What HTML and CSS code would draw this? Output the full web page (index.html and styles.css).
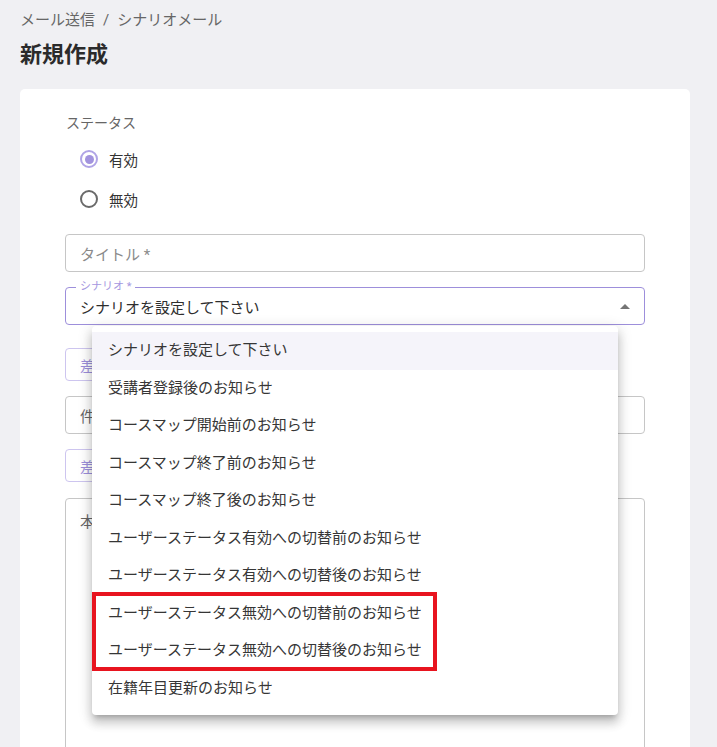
FILE: index.html
```html
<!DOCTYPE html>
<html lang="ja">
<head>
    <meta charset="UTF-8">
    <meta name="viewport" content="width=device-width, initial-scale=1.0">
    <title>新規作成</title>
    <link rel="stylesheet" href="styles.css">
</head>
<body>
    <div class="page">
        <div class="crumbs">
            <span>メール送信</span>
            <span class="sep">/</span>
            <span>シナリオメール</span>
        </div>
        <h1 class="page-title">新規作成</h1>

        <div class="card">
            <div class="group-label">ステータス</div>
            <div class="radios">
                <label class="radio-row">
                    <span class="radio checked"></span>
                    <span>有効</span>
                </label>
                <label class="radio-row">
                    <span class="radio"></span>
                    <span>無効</span>
                </label>
            </div>

            <div class="field title-field">
                <span class="placeholder">タイトル *</span>
            </div>

            <div class="field select focused">
                <span class="float-label">シナリオ *</span>
                <span class="value">シナリオを設定して下さい</span>
                <span class="caret"></span>

                <ul class="menu">
                    <li class="selected">シナリオを設定して下さい</li>
                    <li>受講者登録後のお知らせ</li>
                    <li>コースマップ開始前のお知らせ</li>
                    <li>コースマップ終了前のお知らせ</li>
                    <li>コースマップ終了後のお知らせ</li>
                    <li>ユーザーステータス有効への切替前のお知らせ</li>
                    <li>ユーザーステータス有効への切替後のお知らせ</li>
                    <li>ユーザーステータス無効への切替前のお知らせ</li>
                    <li>ユーザーステータス無効への切替後のお知らせ</li>
                    <li>在籍年目更新のお知らせ</li>
                    <div class="mark"></div>
                </ul>
            </div>

            <button class="chip first">差し込み文字</button>

            <div class="field subject">
                <span class="placeholder dark">件名 *</span>
            </div>

            <button class="chip">差し込み文字</button>

            <div class="field area">
                <span class="placeholder dark">本文 *</span>
            </div>
        </div>
    </div>
</body>
</html>
```

FILE: styles.css
```css
*{margin: 0;padding: 0;box-sizing: border-box;}
body{
    background-color: #f0f0f3;
    font-family: Roboto, "Noto Sans CJK JP", sans-serif;
    color: #333;
    overflow: hidden;
}
.page{
    padding: 10px 27px 0 20px;
}
.crumbs{
    font-size: 15px;
    line-height: 20px;
    color: #666;
    display: flex;
    gap: 8px;
}
.page-title{
    font-size: 22px;
    line-height: 30px;
    font-weight: 700;
    color: #2b2b2b;
    margin-top: 10px;
}
.card{
    margin-top: 19px;
    background: #fff;
    border-radius: 5px 5px 0 0;
    padding: 24px 45px 0 45px;
    height: 700px;
}
.group-label{
    font-size: 14px;
    line-height: 21px;
    color: #666;
    padding-left: 1px;
}
.radios{
    margin-top: 5px;
    display: flex;
    flex-direction: column;
}
.radio-row{
    height: 40px;
    display: flex;
    align-items: center;
    gap: 11px;
    padding-left: 15px;
    font-size: 14.5px;
    color: #333;
}
.radio{
    width: 18px;
    height: 18px;
    border: 2px solid #6a6a6a;
    border-radius: 50%;
    display: flex;
    align-items: center;
    justify-content: center;
}
.radio.checked{
    border-color: #b0a4e6;
}
.radio.checked::after{
    content: "";
    width: 9px;
    height: 9px;
    border-radius: 50%;
    background: #a293de;
}
.field{
    position: relative;
    height: 38px;
    border: 1px solid #c6c6c6;
    border-radius: 4px;
    display: flex;
    align-items: center;
    padding: 0 14px;
    font-size: 15px;
}
.title-field{margin-top: 15px;}
.placeholder{color: #8a8a8a;}
.placeholder.dark{color: #666;}
.select{
    margin-top: 15px;
}
.select.focused{
    border-color: #9d8fdb;
}
.float-label{
    position: absolute;
    top: -8px;
    left: 10px;
    padding: 0 4px;
    background: #fff;
    font-size: 11px;
    line-height: 14px;
    color: #a597e0;
}
.value{color: #2e2e2e;}
.caret{
    position: absolute;
    right: 14px;
    top: 16px;
    border-left: 5px solid transparent;
    border-right: 5px solid transparent;
    border-bottom: 5px solid #757575;
}
.chip{
    display: block;
    margin-top: 15px;
    height: 33px;
    width: 150px;
    white-space: nowrap;
    border: 1px solid #cdc5ef;
    border-radius: 4px;
    background: #fff;
    color: #9d8fdb;
    font-family: inherit;
    font-size: 14px;
    text-align: left;
    padding: 0 14px;
}
.chip.first{margin-top: 23px;}
.subject{margin-top: 15px;}
.area{
    margin-top: 16px;
    height: 300px;
    align-items: flex-start;
    padding-top: 11px;
}
.menu{
    position: absolute;
    top: 38px;
    left: 26px;
    width: 526px;
    list-style: none;
    background: #fff;
    border-radius: 4px;
    padding: 6px 0 8px;
    box-shadow: 0 5px 5px -3px rgba(0,0,0,.2), 0 8px 10px 1px rgba(0,0,0,.14), 0 3px 14px 2px rgba(0,0,0,.12);
    z-index: 2;
}
.menu li{
    height: 37.5px;
    line-height: 37.5px;
    padding: 0 16px;
    font-size: 15px;
    color: #363636;
    white-space: nowrap;
}
.menu li.selected{
    background: #f5f4fa;
}
.mark{
    position: absolute;
    left: 0;
    top: 266px;
    width: 345px;
    height: 79px;
    border: 4.5px solid #e8141f;
}
```
